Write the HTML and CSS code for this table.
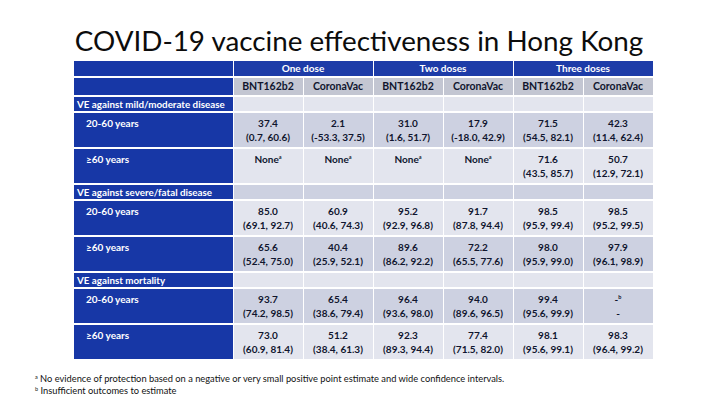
FILE: index.html
```html
<!DOCTYPE html>
<html lang="en">
<head>
<meta charset="utf-8">
<title>COVID-19 vaccine effectiveness in Hong Kong</title>
<link rel="stylesheet" href="styles.css">
</head>
<body>
<main class="slide">
  <h1 class="title">COVID-19 vaccine effectiveness in Hong Kong</h1>
  <table class="ve">
    <colgroup>
      <col class="c-label">
      <col class="c-data"><col class="c-data"><col class="c-data">
      <col class="c-data"><col class="c-data"><col class="c-data">
    </colgroup>
    <thead>
      <tr class="r-group">
        <th class="lab"></th>
        <th colspan="2">One dose</th>
        <th colspan="2">Two doses</th>
        <th colspan="2">Three doses</th>
      </tr>
      <tr class="r-vacc">
        <th class="lab"></th>
        <th>BNT162b2</th><th>CoronaVac</th>
        <th>BNT162b2</th><th>CoronaVac</th>
        <th>BNT162b2</th><th>CoronaVac</th>
      </tr>
    </thead>
    <tbody>
      <tr class="r-sec light">
        <th class="lab sec">VE against mild/moderate disease</th>
        <td></td><td></td><td></td><td></td><td></td><td></td>
      </tr>
      <tr class="r-data dark">
        <th class="lab age">20-60 years</th>
        <td>37.4<br>(0.7, 60.6)</td><td>2.1<br>(-53.3, 37.5)</td>
        <td>31.0<br>(1.6, 51.7)</td><td>17.9<br>(-18.0, 42.9)</td>
        <td>71.5<br>(54.5, 82.1)</td><td>42.3<br>(11.4, 62.4)</td>
      </tr>
      <tr class="r-data light">
        <th class="lab age">≥60 years</th>
        <td>None<sup>a</sup></td><td>None<sup>a</sup></td>
        <td>None<sup>a</sup></td><td>None<sup>a</sup></td>
        <td>71.6<br>(43.5, 85.7)</td><td>50.7<br>(12.9, 72.1)</td>
      </tr>
      <tr class="r-sec dark">
        <th class="lab sec">VE against severe/fatal disease</th>
        <td></td><td></td><td></td><td></td><td></td><td></td>
      </tr>
      <tr class="r-data light">
        <th class="lab age">20-60 years</th>
        <td>85.0<br>(69.1, 92.7)</td><td>60.9<br>(40.6, 74.3)</td>
        <td>95.2<br>(92.9, 96.8)</td><td>91.7<br>(87.8, 94.4)</td>
        <td>98.5<br>(95.9, 99.4)</td><td>98.5<br>(95.2, 99.5)</td>
      </tr>
      <tr class="r-data dark">
        <th class="lab age">≥60 years</th>
        <td>65.6<br>(52.4, 75.0)</td><td>40.4<br>(25.9, 52.1)</td>
        <td>89.6<br>(86.2, 92.2)</td><td>72.2<br>(65.5, 77.6)</td>
        <td>98.0<br>(95.9, 99.0)</td><td>97.9<br>(96.1, 98.9)</td>
      </tr>
      <tr class="r-sec light">
        <th class="lab sec">VE against mortality</th>
        <td></td><td></td><td></td><td></td><td></td><td></td>
      </tr>
      <tr class="r-data dark">
        <th class="lab age">20-60 years</th>
        <td>93.7<br>(74.2, 98.5)</td><td>65.4<br>(38.6, 79.4)</td>
        <td>96.4<br>(93.6, 98.0)</td><td>94.0<br>(89.6, 96.5)</td>
        <td>99.4<br>(95.6, 99.9)</td><td>-<sup>b</sup><br>-</td>
      </tr>
      <tr class="r-data light">
        <th class="lab age">≥60 years</th>
        <td>73.0<br>(60.9, 81.4)</td><td>51.2<br>(38.4, 61.3)</td>
        <td>92.3<br>(89.3, 94.4)</td><td>77.4<br>(71.5, 82.0)</td>
        <td>98.1<br>(95.6, 99.1)</td><td>98.3<br>(96.4, 99.2)</td>
      </tr>
    </tbody>
  </table>
  <div class="notes">
    <p><sup>a</sup> No evidence of protection based on a negative or very small positive point estimate and wide confidence intervals.</p>
    <p><sup>b</sup> Insufficient outcomes to estimate</p>
  </div>
</main>
</body>
</html>
```

FILE: styles.css
```css
html, body {
  margin: 0;
  padding: 0;
  background: #ffffff;
}

.slide {
  width: 704px;
  height: 407px;
  display: flex;
  flex-direction: column;
  align-items: center;
  overflow: hidden;
}

.title {
  margin: 23px 0 2px 14px;
  font-family: Lato, "Open Sans", sans-serif;
  font-weight: 400;
  font-size: 27.8px;
  line-height: 36px;
  color: #0c0c0c;
  white-space: nowrap;
}

.ve {
  align-self: flex-start;
  margin-left: 74px;
  border-collapse: collapse;
  table-layout: fixed;
  width: 579px;
  font-family: Lato, "Open Sans", sans-serif;
  font-weight: 700;
  font-size: 10px;
  color: #10152e;
}

.c-label { width: 159px; }
.c-data { width: 70px; }

.ve th,
.ve td {
  padding: 0;
  border-left: 1px solid #ffffff;
  border-right: 1px solid #ffffff;
  border-bottom: 2px solid #ffffff;
  text-align: center;
  vertical-align: top;
  line-height: 14px;
  font-weight: 700;
}

.ve sup {
  font-size: 5.5px;
  line-height: 0;
  vertical-align: 4px;
}

.r-group th {
  height: 15px;
  line-height: 15px;
  background: #1d3ca8;
  color: #ffffff;
  font-size: 10px;
  vertical-align: middle;
}

.r-vacc th {
  height: 17px;
  line-height: 17px;
  background: #c3c6d2;
  color: #10152e;
  font-size: 10.5px;
  vertical-align: middle;
}

.r-vacc th.lab { background: #1a3aa6; }

.ve th.lab {
  background: #1737a6;
  color: #ffffff;
  text-align: left;
  border-left: none;
}

.ve th.sec {
  padding-left: 3px;
  height: 14px;
  line-height: 14px;
  font-size: 9.8px;
}

.ve th.age {
  padding-left: 12px;
  padding-top: 3px;
  height: 31px;
}

.r-sec td { height: 14px; }

.r-data td {
  padding-top: 3px;
  height: 31px;
}

.dark td { background: #cdd1e1; }
.light td { background: #e3e5ee; }

.notes {
  align-self: flex-start;
  margin: 12px 0 0 35px;
  font-family: Lato, "Open Sans", sans-serif;
  font-size: 9.3px;
  color: #111111;
}

.notes p {
  margin: 0;
  line-height: 12px;
}

.notes sup {
  font-size: 5.5px;
  vertical-align: 3px;
  line-height: 0;
}
```
